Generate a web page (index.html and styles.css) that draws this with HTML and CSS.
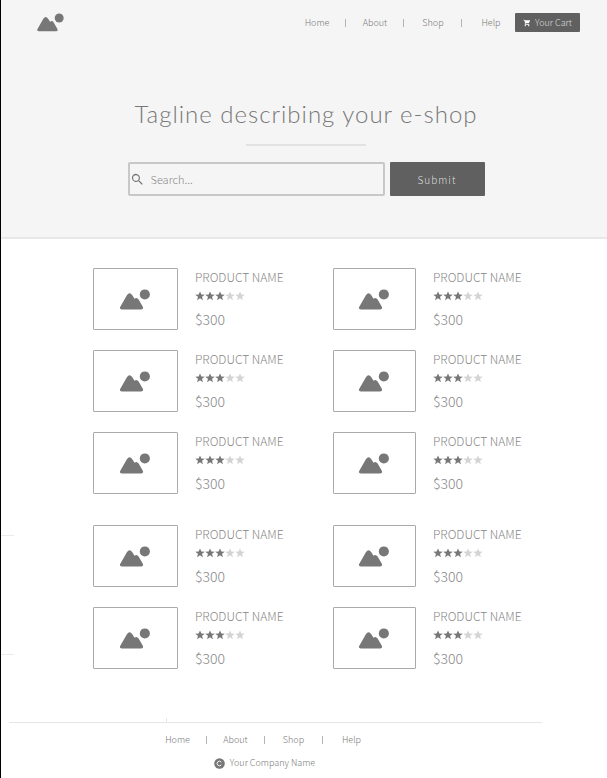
FILE: index.html
```html
<!DOCTYPE html>
<html lang="en">
<head>
<meta charset="utf-8">
<meta name="viewport" content="width=device-width, initial-scale=1">
<title>E-shop</title>
<link rel="stylesheet" href="styles.css">
</head>
<body>
<svg class="defs" aria-hidden="true">
  <symbol id="picture" viewBox="0 0 32 22">
    <path d="M2.200 21.500Q-.8 21.200 .6 18.600L7.500 6.500Q10.300 2.500 13.200 6.500L15.500 10.200Q17.800 8.200 19.800 11L24.200 18.600Q25.200 21.200 22.500 21.500Z"/>
    <circle cx="26.300" cy="5.700" r="5.300"/>
  </symbol>
  <symbol id="star" viewBox="0 0 24 24">
    <path d="M12 17.300 18.900 22l-2-8L23.500 9l-8.200-.6L12 1 8.700 8.400.500 9 7.100 14l-2 8z"/>
  </symbol>
  <symbol id="cart" viewBox="0 0 24 24">
    <path d="M7 18a2 2 0 1 0 0 4 2 2 0 0 0 0-4zM1 2v2h2l3.600 7.600-1.400 2.400C4.500 15.400 5.500 17 7 17h12v-2H7.400l1.100-2h7.500c.7 0 1.400-.4 1.700-1L21.300 5.500C21.700 4.800 21.200 4 20.400 4H5.200l-.9-2zM17 18a2 2 0 1 0 0 4 2 2 0 0 0 0-4z"/>
  </symbol>
</svg>
<div class="page">
  <header class="hero">
    <div class="topbar">
      <a class="logo" href="#" aria-label="Home page"><svg><use href="#picture"/></svg></a>
      <nav aria-label="Main">
        <ul class="links">
          <li><a href="#">Home</a></li>
          <li><a href="#">About</a></li>
          <li><a href="#">Shop</a></li>
          <li><a href="#">Help</a></li>
        </ul>
      </nav>
      <button class="cart" type="button"><svg aria-hidden="true"><use href="#cart"/></svg>Your Cart</button>
    </div>
    <h1>Tagline describing your e-shop</h1>
    <hr class="divider">
    <form class="search">
      <label class="field" for="q">
        <svg viewBox="0 0 24 24" role="img" aria-label="Search"><path d="M15.500 14h-.8l-.3-.3A6.500 6.500 0 1 0 13.700 14.400l.3.3v.8l5 5 1.500-1.500zM9.500 14a4.500 4.500 0 1 1 0-9 4.500 4.500 0 0 1 0 9z"/></svg>
        <input id="q" type="text" placeholder="Search...">
      </label>
      <button class="submit" type="submit">Submit</button>
    </form>
  </header>
  <main id="products"></main>
  <footer>
    <nav aria-label="Footer">
      <ul class="links">
        <li><a href="#">Home</a></li>
        <li><a href="#">About</a></li>
        <li><a href="#">Shop</a></li>
        <li><a href="#">Help</a></li>
      </ul>
    </nav>
    <p class="company">
      <svg viewBox="0 0 24 24" aria-hidden="true"><circle class="disc" cx="12" cy="12" r="11.500"/><path class="letter" d="M16 9.200A5 5 0 1 0 16 14.800"/></svg>
      Your Company Name
    </p>
  </footer>
</div>
<script src="products.js"></script>
</body>
</html>
```
FILE: styles.css
```css
* { box-sizing: border-box; }

body {
  margin: 0;
  background: #fff;
  color: #777;
  font-family: "Noto Sans CJK SC", "Noto Sans", sans-serif;
  font-weight: 300;
}

a { color: inherit; text-decoration: none; }
ul, h1, h2, p { margin: 0; padding: 0; list-style: none; font-weight: 300; }
svg { display: block; fill: currentColor; }
button, input { font: inherit; }
.defs { position: absolute; width: 0; height: 0; }

.page {
  min-height: 100vh;
  border-left: 1px solid #000;
}

.hero {
  padding: 13px 0 41px 4px;
  background: #f5f5f5;
  border-bottom: 2px solid #e8e8e8;
}

.topbar { display: flex; align-items: flex-start; padding: 0 27px 0 32px; }
.logo { margin-right: auto; }
.logo svg { width: 27px; height: 19px; }

.links {
  display: grid;
  grid-template-columns: repeat(4, 46px);
  column-gap: 12px;
  justify-content: center;
  font-size: 9px;
  line-height: 20px;
  text-align: center;
}
.links li { position: relative; }
.links li + li::before {
  content: "";
  position: absolute;
  left: -7px;
  top: 6px;
  width: 1px;
  height: 8px;
  background: #b4b4b4;
}

.cart {
  display: flex;
  align-items: center;
  gap: 4px;
  height: 19px;
  margin-left: 1px;
  padding: 0 8px;
  border: 0;
  border-radius: 1px;
  background: #606060;
  color: #ddd;
  font-size: 9px;
}
.cart svg { width: 8px; height: 8px; color: #fff; }

h1 {
  margin-top: 65px;
  font-family: Lato, sans-serif;
  font-size: 24px;
  line-height: 32px;
  letter-spacing: 1px;
  text-align: center;
}

.divider {
  width: 120px;
  height: 2px;
  margin: 14px auto 16px;
  border: 0;
  background: #e2e2e2;
}

.search { display: flex; justify-content: center; gap: 5px; height: 34px; }
.field {
  display: flex;
  align-items: center;
  gap: 6px;
  width: 257px;
  padding: 0;
  border: 2px solid #c8c8c8;
  border-radius: 2px;
}
.field svg { flex: none; width: 15px; height: 15px; }
.field input {
  flex: 1;
  min-width: 0;
  padding: 0;
  border: 0;
  outline: 0;
  background: none;
  color: #777;
  font-size: 11px;
}
.field input::placeholder { color: #888; opacity: 1; }
.submit {
  width: 95px;
  padding: 0;
  border: 0;
  border-radius: 1px;
  background: #606060;
  color: #ddd;
  font-size: 10px;
  letter-spacing: 1px;
}

main { position: relative; padding: 29px 0 0 92px; }
.group {
  display: grid;
  grid-template-columns: 240px 1fr;
  row-gap: 20px;
  margin-bottom: 31px;
}
.tick {
  position: absolute;
  left: 0;
  top: 296px;
  width: 13px;
  height: 120px;
  border: solid #ebebeb;
  border-width: 1px 0;
}

.card { display: flex; gap: 17px; height: 62px; color: #888; }
.thumb {
  display: grid;
  place-items: center;
  width: 85px;
  padding-right: 2px;
  border: 1px solid #aaa;
  border-radius: 1px;
  color: #777;
}
.card:nth-child(even) .thumb { width: 83px; }
.thumb svg { width: 32px; height: 21px; }
.info { padding-top: 1px; }
.info h2 { font-size: 12px; line-height: 16px; }
.stars { display: flex; margin: 6px 0 4px; color: #777; }
.stars svg { width: 10px; height: 10px; }
.stars .off { color: #d4d4d4; }
.price { font-size: 14px; line-height: 28px; }

footer {
  position: relative;
  margin: 53px 65px 0 8px;
  padding: 7px 22px 0 0;
  border-top: 1px solid #e6e6e6;
}
footer::before {
  content: "";
  position: absolute;
  left: 157px;
  bottom: 100%;
  width: 1px;
  height: 5px;
  background: #e6e6e6;
}
.company {
  display: flex;
  justify-content: center;
  align-items: center;
  gap: 5px;
  margin-top: 3px;
  font-size: 9px;
  line-height: 20px;
}
.company svg { width: 11px; height: 11px; }
.letter { fill: none; stroke: #fff; stroke-width: 2; }
```
FILE: products.js
```js
const stars = Array.from({ length: 5 }, (_, i) =>
  `<svg class="${i < 3 ? "on" : "off"}"><use href="#star"/></svg>`).join("");

const card = `
  <article class="card">
    <div class="thumb"><svg aria-hidden="true"><use href="#picture"/></svg></div>
    <div class="info">
      <h2>PRODUCT NAME</h2>
      <div class="stars" role="img" aria-label="3 of 5">${stars}</div>
      <p class="price">$300</p>
    </div>
  </article>`;

document.getElementById("products").innerHTML =
  [6, 4].map(n => `<section class="group">${card.repeat(n)}</section>`).join("") +
  `<div class="tick"></div>`;
```
